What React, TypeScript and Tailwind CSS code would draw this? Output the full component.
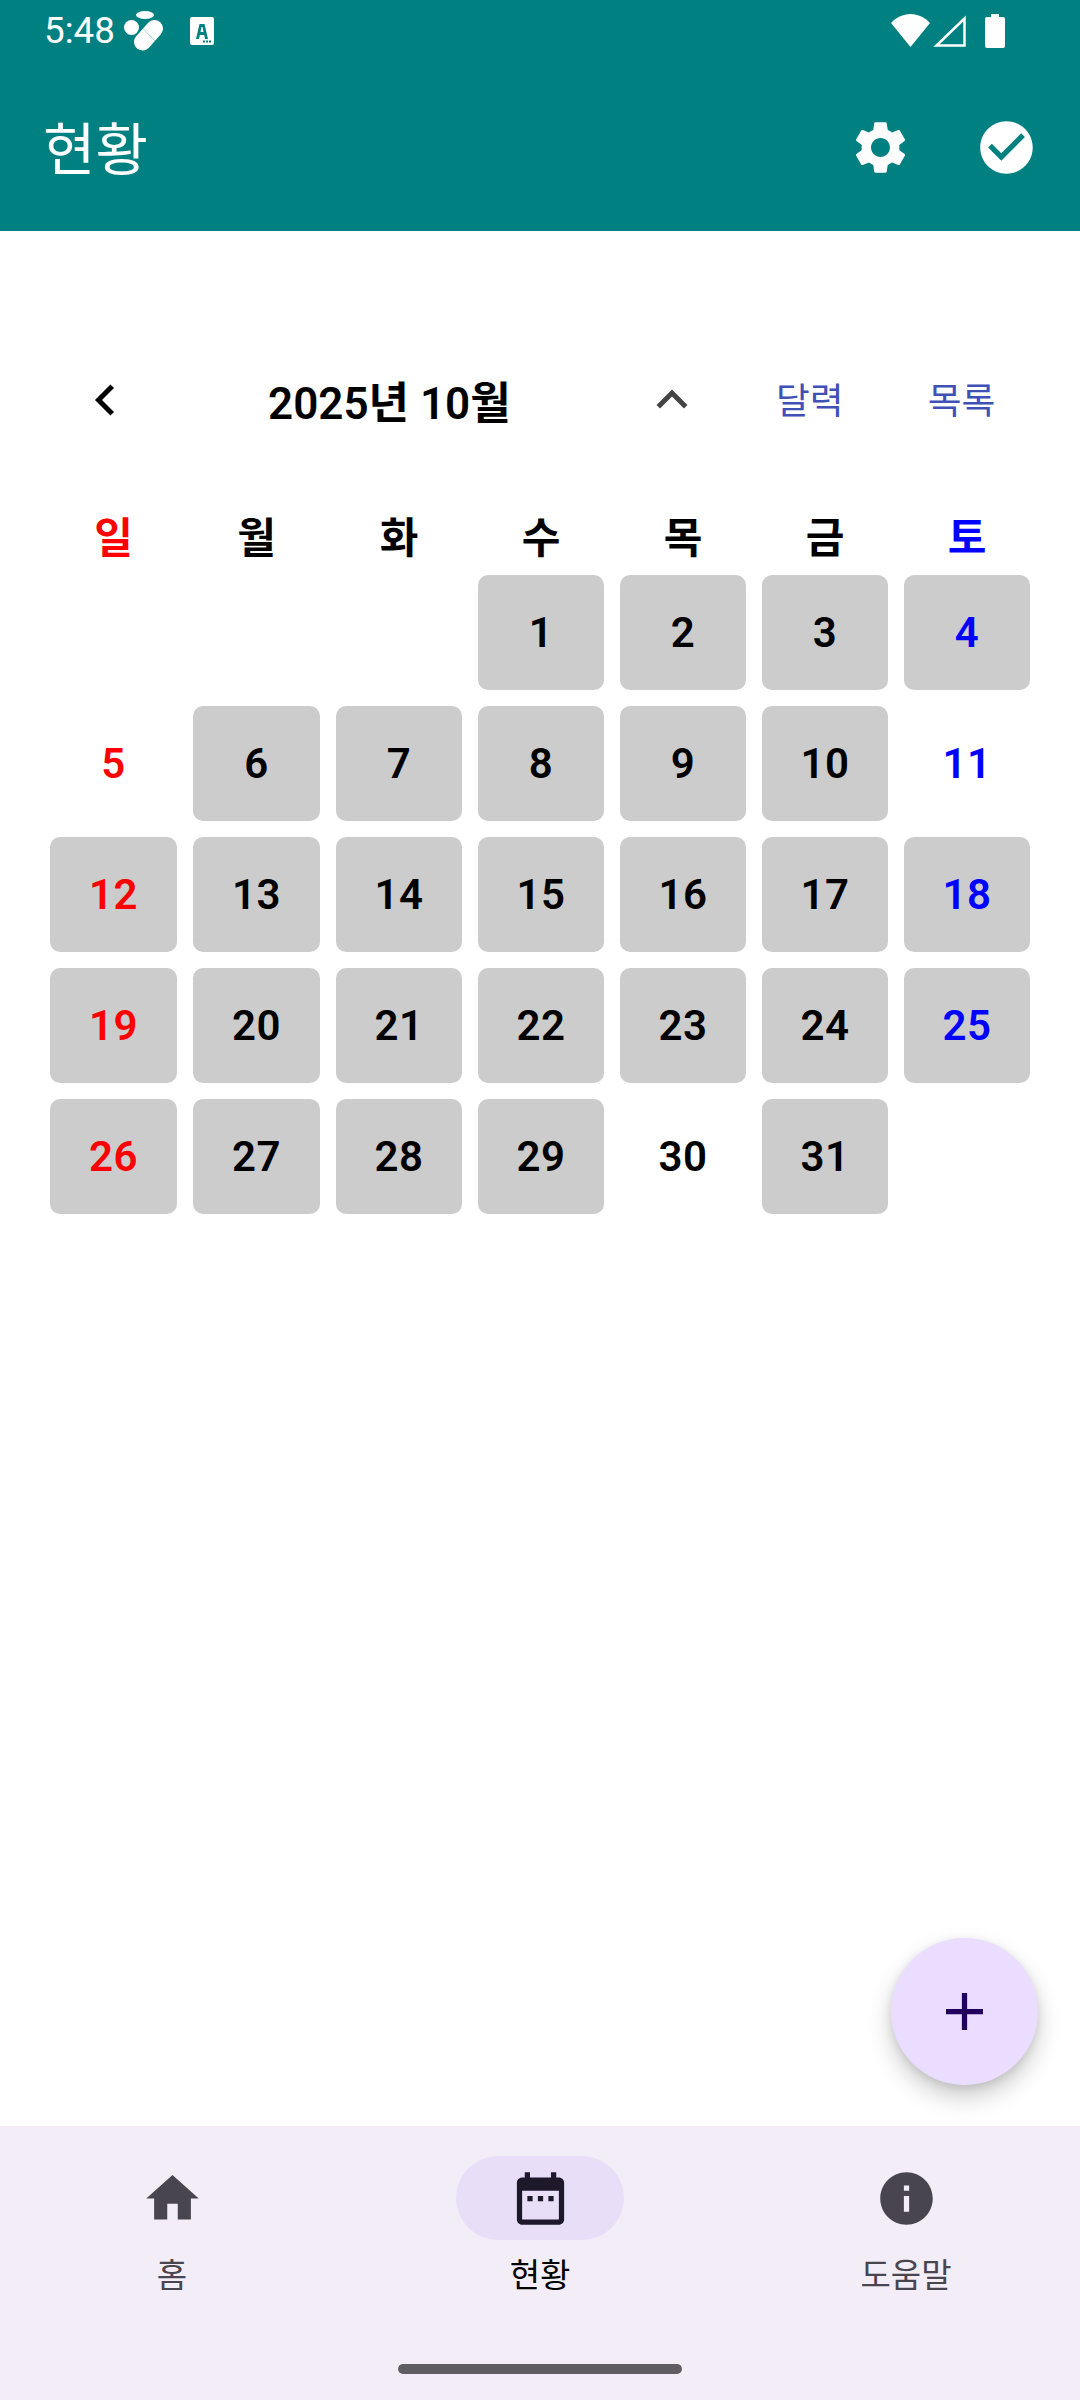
import React from 'react';

const FONT = "font-['Roboto','Noto_Sans_CJK_KR',sans-serif]";

const weekDays = ['일', '월', '화', '수', '목', '금', '토'];
const emptyDays = [5, 11, 30];

const dayColor = (col: number) => {
  if (col === 0) return 'text-[#ff0000]';
  if (col === 6) return 'text-[#0000ff]';
  return 'text-black';
};

const StatusBar = () => (
  <div className="h-[64px] pb-[3px] flex items-center justify-between pl-[44px] pr-[75px]">
    <div className="flex items-center">
      <span className="mt-[2px] text-[36.75px] leading-none text-white">5:48</span>
      <svg width="44" height="44" viewBox="0 0 44 44" className="ml-[7px]">
        <ellipse cx="23" cy="6" rx="9" ry="4" fill="#fff" />
        <circle cx="9.500" cy="18.500" r="7.500" fill="#fff" />
        <path d="M32.500 19.500L20.500 33" stroke="#fff" strokeWidth="17" strokeLinecap="round" fill="none" />
        <path d="M20 18.500l13 13.500" stroke="#008080" strokeOpacity="0.35" strokeWidth="1" fill="none" />
      </svg>
      <svg width="24" height="28" viewBox="0 0 24 28" className="ml-[24px]">
        <rect width="24" height="28" rx="2" fill="#fff" />
        <path fillRule="evenodd" d="M9.500 7h5l3.500 15h-3l-.8-4H9.800L9 22H6zM11.500 10l-1 5h3l-1-5z" fill="#008080" />
        <rect x="13" y="23.500" width="2" height="2" fill="#008080" />
        <rect x="16" y="23.500" width="2" height="2" fill="#008080" />
        <rect x="19" y="23.500" width="2" height="2" fill="#008080" />
      </svg>
    </div>
    <div className="flex items-center">
      <svg width="39" height="33" viewBox="0 0 39 33">
        <path d="M0 9C5 3.500 12 0 19.500 0S34 3.500 39 9L19.500 33z" fill="#fff" />
      </svg>
      <svg width="33" height="32" viewBox="0 0 33 32" className="ml-[3px]">
        <path d="M31.500 3.500V30.500H3.500z" fill="none" stroke="#fff" strokeWidth="2.500" />
      </svg>
      <svg width="20" height="34" viewBox="0 0 20 34" className="ml-[19px]">
        <path d="M6 0h8v3h4a2 2 0 0 1 2 2v27a2 2 0 0 1-2 2H2a2 2 0 0 1-2-2V5a2 2 0 0 1 2-2h4z" fill="#fff" />
      </svg>
    </div>
  </div>
);

const AppBar = () => (
  <div className="h-[167px] flex items-center justify-between pl-[43px] pr-[42px]">
    <span className="mt-[6px] text-[57px] leading-[64px] text-white">현황</span>
    <div className="flex items-center gap-[63px]">
      <svg width="63" height="63" viewBox="0 0 24 24" fill="#fff">
        <path d="M19.140 12.940c.04-.3.060-.61.060-.94 0-.32-.02-.64-.07-.94l2.030-1.580a.49.490 0 0 0 .12-.61l-1.920-3.320a.488.488 0 0 0-.59-.22l-2.390.96c-.5-.38-1.030-.7-1.620-.94l-.36-2.540a.484.484 0 0 0-.48-.41h-3.840c-.24 0-.43.170-.47.410l-.36 2.540c-.59.240-1.130.570-1.620.94l-2.390-.96c-.22-.08-.47 0-.59.220L2.740 8.870c-.12.210-.08.470.12.610l2.030 1.580c-.05.300-.09.630-.09.940s.02.640.07.940l-2.030 1.580a.49.490 0 0 0-.12.610l1.920 3.320c.12.220.37.290.59.220l2.390-.96c.5.380 1.030.7 1.620.94l.36 2.540c.05.240.24.410.48.410h3.840c.24 0 .44-.17.470-.41l.36-2.540c.59-.24 1.130-.56 1.620-.94l2.390.96c.22.080.47 0 .59-.22l1.920-3.320c.12-.22.070-.47-.12-.61l-2.010-1.580zM12 15.600c-1.980 0-3.600-1.620-3.600-3.600s1.620-3.600 3.600-3.600 3.600 1.620 3.600 3.600-1.620 3.600-3.600 3.600z" />
      </svg>
      <svg width="63" height="63" viewBox="0 0 24 24" fill="#fff">
        <path d="M12 2C6.480 2 2 6.480 2 12s4.480 10 10 10 10-4.480 10-10S17.520 2 12 2zm-2 15l-5-5 1.410-1.410L10 14.170l7.590-7.590L19 8l-9 9z" />
      </svg>
    </div>
  </div>
);

const CalendarHeader = () => (
  <div className="h-[73px] mt-[134px] flex items-center">
    <svg width="24" height="34" viewBox="0 0 24 34" className="ml-[93px] mb-[4px]">
      <path d="M19.200 3.300L5.500 17l13.700 13.700" fill="none" stroke="#000" strokeWidth="5" />
    </svg>
    <span className="ml-[151px] mt-[5px] w-[240px] text-[44px] leading-none font-semibold text-black whitespace-nowrap">2025년 10월</span>
    <svg width="36" height="22" viewBox="0 0 36 22" className="ml-[146px] mb-[6px]">
      <path d="M4.300 18.700L18 5l13.700 13.700" fill="none" stroke="#444" strokeWidth="5" />
    </svg>
    <span className="ml-[86px] mt-[2px] text-[36.75px] leading-none text-[#3f51b5] whitespace-nowrap">달력</span>
    <span className="ml-[84px] mt-[2px] text-[36.75px] leading-none text-[#3f51b5] whitespace-nowrap">목록</span>
  </div>
);

const Calendar = () => {
  const cells: (number | null)[] = [null, null, null];
  for (let d = 1; d <= 31; d++) cells.push(d);
  cells.push(null);
  return (
    <div className="mt-[77px] px-[50px]">
      <div className="grid grid-cols-[127px_127px_126px_126px_126px_126px_126px] gap-x-[16px]">
        {weekDays.map((w, i) => (
          <div key={w} className={`h-[48px] flex items-center justify-center text-[42px] leading-none font-bold ${dayColor(i)}`}>
            {w}
          </div>
        ))}
      </div>
      <div className="grid grid-cols-[127px_127px_126px_126px_126px_126px_126px] auto-rows-[115px] gap-x-[16px] gap-y-[16px] mt-[12px]">
        {cells.map((d, i) => (
          <div
            key={i}
            className={`flex items-center justify-center rounded-[10px] text-[42px] leading-none font-semibold tracking-[0.5px] ${dayColor(i % 7)} ${d !== null && !emptyDays.includes(d) ? 'bg-[#cccccc]' : ''}`}
          >
            {d}
          </div>
        ))}
      </div>
    </div>
  );
};

const NavBar = () => (
  <div className="h-[274px] bg-[#f3edf7] flex flex-col">
    <div className="flex pt-[30px] pl-[88px]">
      <div className="w-[168px] flex flex-col items-center">
        <div className="h-[84px] flex items-center justify-center">
          <svg width="63" height="63" viewBox="0 0 24 24" fill="#49454f">
            <path d="M10 20v-6h4v6h5v-8h3L12 3 2 12h3v8z" />
          </svg>
        </div>
        <span className="mt-[15px] text-[33px] leading-[42px] text-[#49454f]">홈</span>
      </div>
      <div className="ml-[200px] w-[168px] flex flex-col items-center">
        <div className="h-[84px] w-[168px] rounded-full bg-[#e8def8] flex items-center justify-center">
          <svg width="63" height="63" viewBox="0 0 24 24" fill="#1d192b">
            <path d="M19 4h-1V2h-2v2H8V2H6v2H5c-1.100 0-2 .9-2 2v14c0 1.100.9 2 2 2h14c1.100 0 2-.9 2-2V6c0-1.100-.9-2-2-2zm0 16H5V9h14v11zM7 11h2v2H7zm4 0h2v2h-2zm4 0h2v2h-2z" />
          </svg>
        </div>
        <span className="mt-[15px] text-[33px] leading-[42px] text-black">현황</span>
      </div>
      <div className="ml-[198px] w-[168px] flex flex-col items-center">
        <div className="h-[84px] flex items-center justify-center">
          <svg width="63" height="63" viewBox="0 0 24 24" fill="#49454f">
            <path d="M12 2C6.480 2 2 6.480 2 12s4.480 10 10 10 10-4.480 10-10S17.520 2 12 2zm1 15h-2v-6h2v6zm0-8h-2V7h2v2z" />
          </svg>
        </div>
        <span className="mt-[15px] text-[33px] leading-[42px] text-[#49454f]">도움말</span>
      </div>
    </div>
    <div className="mt-auto mb-[26px] mx-auto w-[284px] h-[10px] rounded-full bg-[#605d62]" />
  </div>
);

export default function App() {
  return (
    <div className={`${FONT} relative w-[1080px] h-[2400px] bg-white flex flex-col overflow-hidden`}>
      <div className="bg-[#008080]">
        <StatusBar />
        <AppBar />
      </div>
      <div className="flex-1">
        <CalendarHeader />
        <Calendar />
      </div>
      <NavBar />
      <button className="absolute left-[891px] top-[1938px] w-[147px] h-[147px] rounded-full bg-[#eaddff] flex items-center justify-center shadow-[0_12px_24px_rgba(0,0,0,0.2),0_3px_8px_rgba(0,0,0,0.1)]">
        <svg width="37" height="37" viewBox="0 0 37 37">
          <path d="M18.500 0v37M0 18.500h37" stroke="#21005d" strokeWidth="5.250" fill="none" />
        </svg>
      </button>
    </div>
  );
}
